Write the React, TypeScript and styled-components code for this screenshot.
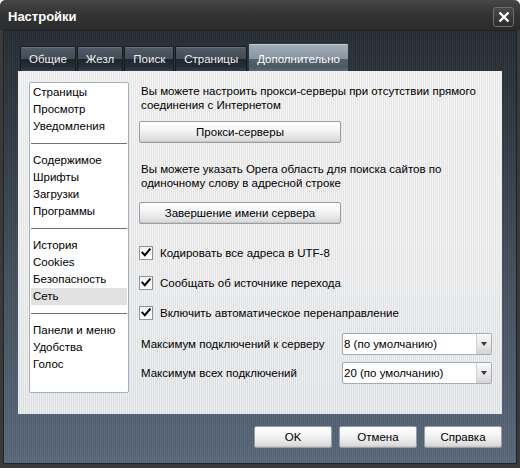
import React from 'react';
import styled, { createGlobalStyle } from 'styled-components';

const tabs = ['Общие', 'Жезл', 'Поиск', 'Страницы', 'Дополнительно'];

const sections: (string | null)[] = [
  'Страницы',
  'Просмотр',
  'Уведомления',
  null,
  'Содержимое',
  'Шрифты',
  'Загрузки',
  'Программы',
  null,
  'История',
  'Cookies',
  'Безопасность',
  'Сеть',
  null,
  'Панели и меню',
  'Удобства',
  'Голос',
];

const checks = [
  'Кодировать все адреса в UTF-8',
  'Сообщать об источнике перехода',
  'Включить автоматическое перенаправление',
];

const CheckMark = () => (
  <svg width="14" height="14" viewBox="0 0 14 14">
    <path d="M2.8 6.6 L5.6 9.6 L11.4 2.8" fill="none" stroke="#000" strokeWidth="2.3" strokeLinecap="square" />
  </svg>
);

const App = () => (
  <>
    <GlobalStyle />
    <Window>
      <TitleBar>
        <Title>Настройки</Title>
        <CloseButton>
          <svg width="18" height="18" viewBox="0 0 18 18">
            <path d="M4.5 4.5 L13.5 13.5 M13.5 4.5 L4.5 13.5" stroke="#fff" strokeWidth="2.4" />
          </svg>
        </CloseButton>
      </TitleBar>

      <Body>
        <Tabs>
          {tabs.map(tab => (
            <Tab key={tab} $active={tab === 'Дополнительно'}>
              {tab}
            </Tab>
          ))}
        </Tabs>

        <Panel>
          <SectionList>
            {sections.map((item, i) =>
              item ? (
                <SectionItem key={i} $selected={item === 'Сеть'}>
                  {item}
                </SectionItem>
              ) : (
                <Separator key={i} />
              )
            )}
          </SectionList>

          <Content>
            <Note $top={2}>
              Вы можете настроить прокси-серверы при отсутствии прямого соединения с Интернетом
            </Note>
            <ActionButton $top={9}>Прокси-серверы</ActionButton>

            <Note $top={19}>
              Вы можете указать Opera область для поиска сайтов по одиночному слову в адресной строке
            </Note>
            <ActionButton $top={12}>Завершение имени сервера</ActionButton>

            {checks.map((label, i) => (
              <CheckRow key={label} $top={i === 0 ? 21 : 14}>
                <CheckBox>
                  <CheckMark />
                </CheckBox>
                {label}
              </CheckRow>
            ))}

            <SelectRow $top={12}>
              <FieldLabel>Максимум подключений к серверу</FieldLabel>
              <Select>
                <SelectValue>8 (по умолчанию)</SelectValue>
                <SelectArrow />
              </Select>
            </SelectRow>
            <SelectRow $top={7}>
              <FieldLabel>Максимум всех подключений</FieldLabel>
              <Select>
                <SelectValue>20 (по умолчанию)</SelectValue>
                <SelectArrow />
              </Select>
            </SelectRow>
          </Content>
        </Panel>

        <Footer>
          <DialogButton>OK</DialogButton>
          <DialogButton>Отмена</DialogButton>
          <DialogButton>Справка</DialogButton>
        </Footer>
      </Body>
    </Window>
  </>
);

export default App;

const GlobalStyle = createGlobalStyle`
  html, body {
    margin: 0;
    padding: 0;
    background: #ffffff;
  }

  body {
    font-family: "Liberation Sans", Arial, sans-serif;
    font-size: 11.5px;
    color: #000000;
  }

  * {
    box-sizing: border-box;
  }
`;

const Window = styled.div`
  width: 520px;
  height: 468px;
  display: flex;
  flex-direction: column;
  padding: 0 3px 4px 3px;
  background: #3a3a3a;
  border-radius: 6px 6px 0 0;
`;

const TitleBar = styled.div`
  height: 30px;
  display: flex;
  align-items: center;
  justify-content: space-between;
  margin: 0 -3px;
  padding: 0 6px 0 8px;
  background: linear-gradient(180deg, #474747 0%, #343434 45%, #2b2b2b 100%);
  border-radius: 6px 6px 0 0;
`;

const Title = styled.div`
  font-weight: bold;
  font-size: 13px;
  color: #ffffff;
  margin-top: 2px;
`;

const CloseButton = styled.div`
  width: 21px;
  height: 20px;
  margin-top: 4px;
  display: flex;
  align-items: center;
  justify-content: center;
  border: 1px solid #6e6e6e;
  border-radius: 3px;
  background: linear-gradient(180deg, #4a4a4a 0%, #2c2c2c 100%);
`;

const Body = styled.div`
  flex: 1;
  display: flex;
  flex-direction: column;
  padding: 12px 14px 15px 14px;
  border: 1px solid #1d2228;
  background:
    repeating-linear-gradient(90deg, rgba(255, 255, 255, 0.035) 0 1px, rgba(0, 0, 0, 0.03) 1px 2px),
    linear-gradient(180deg, #262c33 0%, #323b45 25%, #46525e 60%, #58677a 100%);
`;

const Tabs = styled.div`
  height: 28px;
  display: flex;
  align-items: flex-end;
  padding-left: 2px;
`;

interface TabProps {
  $active?: boolean;
}

const Tab = styled.div<TabProps>`
  height: ${({ $active }: TabProps) => ($active ? '28px' : '25px')};
  padding: ${({ $active }: TabProps) => ($active ? '3px 8px 0 8px' : '0 8px')};
  margin-right: 1px;
  display: flex;
  align-items: center;
  color: ${({ $active }: TabProps) => ($active ? '#ffffff' : '#eef0f2')};
  border: 1px solid ${({ $active }: TabProps) => ($active ? '#2c353e' : '#161b21')};
  border-bottom: none;
  border-radius: 2px 2px 0 0;
  box-shadow: inset 0 1px 0 ${({ $active }: TabProps) => ($active ? '#c4ccd4' : '#66707a')};
  background: ${({ $active }: TabProps) =>
    $active
      ? 'linear-gradient(180deg, #a3aebb 0%, #8894a1 55%, #56636f 57%, #4b5865 85%, #5d6a78 100%)'
      : 'linear-gradient(180deg, #525c67 0%, #434c57 48%, #1e252d 50%, #242c35 82%, #37414c 100%)'};
`;

const Panel = styled.div`
  height: 343px;
  display: grid;
  grid-template-columns: 100px 1fr;
  column-gap: 10px;
  padding: 11px 10px 21px 11px;
  background:
    repeating-linear-gradient(90deg, rgba(255, 255, 255, 0.45) 0 1px, rgba(0, 0, 0, 0.025) 1px 2px),
    linear-gradient(180deg, #ececec 0%, #e9e9ea 50%, #dfe2e5 100%);
`;

const SectionList = styled.div`
  background: #ffffff;
  border: 1px solid #a7afb8;
  border-radius: 2px;
  padding: 1px 1px;
  display: flex;
  flex-direction: column;
`;

interface SectionItemProps {
  $selected?: boolean;
}

const SectionItem = styled.div<SectionItemProps>`
  height: 17px;
  line-height: 17px;
  padding-left: 2px;
  white-space: nowrap;
  background: ${({ $selected }: SectionItemProps) => ($selected ? '#e1e1e1' : 'transparent')};
`;

const Separator = styled.div`
  height: 17px;
  display: flex;
  align-items: center;

  &::before {
    content: '';
    flex: 1;
    height: 1px;
    background: #707070;
  }
`;

const Content = styled.div`
  display: flex;
  flex-direction: column;
  align-items: stretch;
`;

interface OffsetProps {
  $top: number;
}

const Note = styled.div<OffsetProps>`
  margin-top: ${({ $top }: OffsetProps) => $top}px;
  padding-left: 2px;
  line-height: 14px;
`;

const buttonFace = `
  border: 1px solid #979ea6;
  border-radius: 2px;
  background: linear-gradient(180deg, #ffffff 0%, #f5f5f5 40%, #e4e4e4 75%, #d6d6d6 100%);
  box-shadow: inset 0 -1px 0 #c9c9c9;
  display: flex;
  align-items: center;
  justify-content: center;
  color: #000000;
`;

const ActionButton = styled.div<OffsetProps>`
  ${buttonFace}
  margin-top: ${({ $top }: OffsetProps) => $top}px;
  width: 202px;
  height: 22px;
`;

const CheckRow = styled.div<OffsetProps>`
  margin-top: ${({ $top }: OffsetProps) => $top}px;
  height: 16px;
  display: flex;
  align-items: center;
  gap: 7px;
`;

const CheckBox = styled.div`
  width: 14px;
  height: 14px;
  border: 1px solid #8b939b;
  background: linear-gradient(180deg, #f2f2f2 0%, #ffffff 100%);
  display: flex;
  align-items: center;
  justify-content: center;
`;

const SelectRow = styled.div<OffsetProps>`
  margin-top: ${({ $top }: OffsetProps) => $top}px;
  height: 22px;
  display: flex;
  align-items: center;
  justify-content: space-between;
`;

const FieldLabel = styled.div`
  padding-left: 2px;
`;

const Select = styled.div`
  width: 150px;
  height: 22px;
  display: flex;
  border: 1px solid #a3abb3;
  border-radius: 2px;
  background: #ffffff;
`;

const SelectValue = styled.div`
  flex: 1;
  display: flex;
  align-items: center;
  padding-left: 1px;
`;

const SelectArrow = styled.div`
  width: 15px;
  border-left: 1px solid #cfd3d7;
  background: linear-gradient(180deg, #fafafa 0%, #e6e6e6 60%, #d4d4d4 100%);
  display: flex;
  align-items: center;
  justify-content: center;

  &::before {
    content: '';
    border-left: 3.5px solid transparent;
    border-right: 3.5px solid transparent;
    border-top: 4px solid #3c3c3c;
  }
`;

const Footer = styled.div`
  margin-top: 12px;
  display: flex;
  justify-content: flex-end;
  gap: 7px;
`;

const DialogButton = styled.div`
  ${buttonFace}
  width: 78px;
  height: 22px;
`;
